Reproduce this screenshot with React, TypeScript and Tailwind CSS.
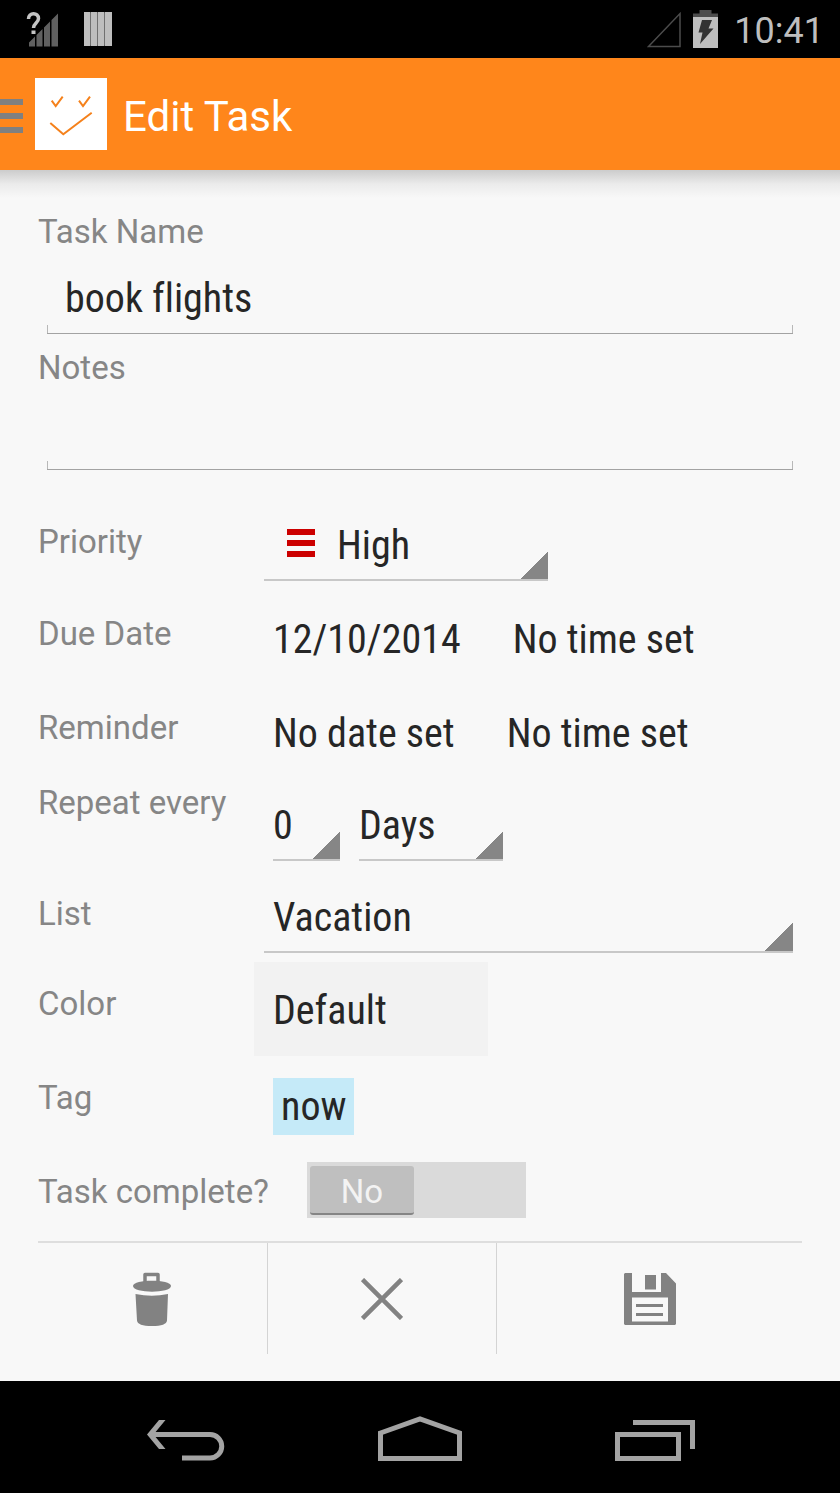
import { useState } from 'react';
import type { ReactNode } from 'react';

interface FieldRowProps {
  label: string;
  htmlFor?: string;
  className?: string;
  labelClassName?: string;
  children: ReactNode;
}

function FieldRow({
  label,
  htmlFor,
  className = 'min-h-[94px]',
  labelClassName = 'w-[216px] pt-[22px]',
  children,
}: FieldRowProps) {
  return (
    <div className={`flex items-start ${className}`}>
      <label
        htmlFor={htmlFor}
        className={`shrink-0 whitespace-nowrap text-[33px] leading-[40px] text-[#868686] ${labelClassName}`}
      >
        {label}
      </label>
      {children}
    </div>
  );
}

interface SpinnerProps {
  id: string;
  value: string;
  options: string[];
  onChange: (value: string) => void;
  icon?: ReactNode;
  ariaLabel?: string;
  className?: string;
}

function Spinner({ id, value, options, onChange, icon, ariaLabel, className = '' }: SpinnerProps) {
  return (
    <div
      className={`flex h-[69px] items-center border-b-2 border-[#c8c8c8] bg-[linear-gradient(135deg,transparent_50%,#868686_50%)] bg-[length:28px_28px] bg-[position:right_bottom] bg-no-repeat ${className}`}
    >
      {icon}
      <select
        id={id}
        aria-label={ariaLabel}
        value={value}
        onChange={(e) => onChange(e.target.value)}
        className="h-full w-full min-w-0 cursor-pointer appearance-none bg-transparent outline-none"
      >
        {options.map((option) => (
          <option key={option}>{option}</option>
        ))}
      </select>
    </div>
  );
}

const inputClass =
  'block h-[70px] w-full resize-none border-b border-[#a3a3a3] bg-[linear-gradient(#b8b8b8,#b8b8b8),linear-gradient(#b8b8b8,#b8b8b8)] bg-[length:1px_8px] bg-[position:left_bottom,right_bottom] bg-no-repeat px-[18px] outline-none [font-variant-ligatures:none]';

const valueClass =
  "font-['Roboto_Condensed','Liberation_Sans_Narrow',Roboto,sans-serif] text-[40px] leading-[50px] text-[#262626]";

function StatusBar() {
  return (
    <div className="flex h-[58px] items-center bg-black pl-[26px] pr-4">
      <svg width="34" height="36" viewBox="0 0 34 36" fill="none">
        <path d="M3 31.5 9 25.5V35.5H3ZM10.5 24 16.5 18V35.5H10.5ZM18 16.5 24 10.5V35.5H18ZM25.5 9 32 2.5V35.5H25.5Z" fill="#606060" />
        <path d="M2.500 8C2.500 1 12.500 1 12.500 7.500C12.500 12 7.500 12 7.500 18" stroke="#000" strokeWidth="7" />
        <path d="M2.500 8C2.500 1 12.500 1 12.500 7.500C12.500 12 7.500 12 7.500 17" stroke="#c4c4c4" strokeWidth="3.500" />
        <path d="M5.500 19.500h4v3.500h-4z" fill="#c4c4c4" />
      </svg>
      <svg className="ml-6" width="28" height="36" viewBox="0 0 28 36">
        <path d="M0 1h6.500v34H0ZM7 1h6.500v34H7ZM14 1h6.500v34H14ZM21 1h7v34h-7z" fill="#bebebe" />
        <path d="M6.500 2v32M13.500 2v32M20.500 2v32" stroke="#707070" />
      </svg>
      <svg className="ml-auto" width="34" height="37" viewBox="0 0 34 37" fill="none">
        <path d="M1.500 35.500 33 2.500V35.500Z" stroke="#4c4c4c" strokeWidth="1.5" />
      </svg>
      <svg className="ml-3" width="25" height="38" viewBox="0 0 25 38">
        <path d="M6.500 0h12v3.500H25V7H0V3.500h6.500z" fill="#4c4c4c" />
        <path d="M0 7h25v31H0z" fill="#bebebe" />
        <path d="M9 10h10l-3.500 8.500H20.500L7 34l2.500-11.500H5.500z" fill="#333" />
      </svg>
      <span className="ml-4 pt-1 text-[36px] leading-[44px] text-[#bebebe]">10:41</span>
    </div>
  );
}

function AppBar() {
  return (
    <header className="flex h-[112px] items-center bg-[#ff861b]">
      <button type="button" aria-label="Open menu" className="flex items-center gap-3">
        <svg width="23" height="38" viewBox="0 0 23 38" fill="#808080">
          <path d="M0 4h23v6H0zM0 18h23v6H0zM0 32h23v6H0z" />
        </svg>
        <svg width="72" height="72" viewBox="0 0 72 72" fill="none" stroke="#f5811b" strokeWidth="2">
          <path d="M0 0h72v72H0z" fill="#fff" stroke="none" />
          <path d="M16.700 22.700 20.700 28 27.700 18.700M44 22.700 48 28 55 18.700M15.300 45 28.300 56.300 56.700 34.700" />
        </svg>
      </button>
      <h1 className="ml-4 pt-1.5 text-[42px] leading-[50px] text-white">Edit Task</h1>
    </header>
  );
}

function NavBar() {
  return (
    <nav className="flex h-[112px] items-center px-[68px] pt-[3px]">
      <button type="button" aria-label="Back" className="flex flex-1 justify-center">
        <svg width="84" height="46" viewBox="0 0 84 46" fill="none">
          <path d="M4 18.500 16 4h6.500L10.500 18.500 22.500 33H16z" fill="#a3a3a3" />
          <path d="M9 18.500H67a11.700 11.700 0 0 1 0 23.500H39" stroke="#a3a3a3" strokeWidth="5" />
        </svg>
      </button>
      <button type="button" aria-label="Home" className="flex flex-1 justify-center">
        <svg width="84" height="46" viewBox="0 0 84 46" fill="none" stroke="#a3a3a3" strokeWidth="5">
          <path d="M2.500 17 42 3 81.500 17V42.500H2.500Z" />
        </svg>
      </button>
      <button type="button" aria-label="Recent apps" className="flex flex-1 justify-center">
        <svg width="84" height="46" viewBox="0 0 84 46" fill="none" stroke="#a3a3a3" strokeWidth="5">
          <path d="M4.500 18.500h61v24h-61zM20 6.500H79.500V33" />
        </svg>
      </button>
    </nav>
  );
}

export default function App() {
  const [name, setName] = useState('book flights');
  const [notes, setNotes] = useState('');
  const [priority, setPriority] = useState('High');
  const [repeatCount, setRepeatCount] = useState('0');
  const [repeatUnit, setRepeatUnit] = useState('Days');
  const [list, setList] = useState('Vacation');
  const [complete, setComplete] = useState(false);

  return (
    <div className="flex min-h-screen flex-col bg-black font-[Roboto,sans-serif]">
      <StatusBar />
      <AppBar />

      <main className="flex-1 bg-[#f8f8f8] pb-[27px]">
        <div className="h-7 bg-linear-to-b from-[#cccccc] via-[#ebebeb] to-[#f8f8f8]" />
        <form className="px-[38px] pt-[14px]" onSubmit={(e) => e.preventDefault()}>
          <label htmlFor="task-name" className="block text-[33px] leading-[40px] text-[#868686]">
            Task Name
          </label>
          <div className={`mx-[9px] mt-3 mb-[14px] ${valueClass}`}>
            <input id="task-name" type="text" value={name} onChange={(e) => setName(e.target.value)} className={inputClass} />
          </div>
          <label htmlFor="notes" className="block text-[33px] leading-[40px] text-[#868686]">
            Notes
          </label>
          <div className={`mx-[9px] mt-3 mb-[30px] ${valueClass}`}>
            <textarea id="notes" rows={1} value={notes} onChange={(e) => setNotes(e.target.value)} className={inputClass} />
          </div>

          <FieldRow label="Priority" htmlFor="priority" className="min-h-[92px]">
            <div className={`pt-3 pl-[10px] ${valueClass}`}>
              <Spinner
                id="priority"
                value={priority}
                options={['High', 'Medium', 'Low']}
                onChange={setPriority}
                className="w-[284px] gap-[22px] pl-[23px]"
                icon={
                  <svg className="mb-1.5 shrink-0" width="28" height="28" viewBox="0 0 28 28" fill="#c00">
                    <path d="M0 0h28v6H0zM0 11h28v6H0zM0 22h28v6H0z" />
                  </svg>
                }
              />
            </div>
          </FieldRow>

          <FieldRow label="Due Date" htmlFor="due-date">
            <div className={`flex gap-[52px] pt-[23px] pl-[19px] ${valueClass}`}>
              <button id="due-date" type="button">12/10/2014</button>
              <button type="button">No time set</button>
            </div>
          </FieldRow>

          <FieldRow label="Reminder" htmlFor="reminder-date">
            <div className={`flex gap-[52px] pt-[23px] pl-[19px] ${valueClass}`}>
              <button id="reminder-date" type="button">No date set</button>
              <button type="button">No time set</button>
            </div>
          </FieldRow>

          <FieldRow label="Repeat every" htmlFor="repeat-count" className="min-h-[92px]" labelClassName="w-[216px] pt-[3px]">
            <div className={`flex gap-[19px] pt-3 pl-[19px] ${valueClass}`}>
              <Spinner
                id="repeat-count"
                value={repeatCount}
                options={['0', '1', '2', '3', '4', '5']}
                onChange={setRepeatCount}
                className="w-[67px]"
              />
              <Spinner
                id="repeat-unit"
                ariaLabel="Repeat unit"
                value={repeatUnit}
                options={['Days', 'Weeks', 'Months', 'Years']}
                onChange={setRepeatUnit}
                className="w-[144px]"
              />
            </div>
          </FieldRow>

          <FieldRow label="List" htmlFor="list" className="min-h-[90px]">
            <div className={`flex-1 pt-3 pr-[9px] pl-[10px] ${valueClass}`}>
              <Spinner
                id="list"
                value={list}
                options={['Vacation', 'Home', 'Work']}
                onChange={setList}
                className="pl-[9px]"
              />
            </div>
          </FieldRow>

          <FieldRow label="Color" htmlFor="color">
            <button id="color" type="button" className={`h-[94px] w-[234px] bg-[#f2f2f2] px-[19px] pt-1 text-left ${valueClass}`}>
              Default
            </button>
          </FieldRow>

          <FieldRow label="Tag" htmlFor="tag">
            <div className="pt-[22px] pl-[19px]">
              <button id="tag" type="button" className={`h-[57px] bg-[#c5eaf8] px-2 ${valueClass}`}>
                now
              </button>
            </div>
          </FieldRow>

          <FieldRow
            label="Task complete?"
            htmlFor="complete"
            className="min-h-[91px]"
            labelClassName="w-[269px] pt-[22px]"
          >
            <label className="mt-3 flex h-14 w-[219px] cursor-pointer items-center bg-[#dadada] px-[3px]">
              <input
                id="complete"
                type="checkbox"
                role="switch"
                aria-label="Task complete?"
                checked={complete}
                onChange={(e) => setComplete(e.target.checked)}
                className="peer sr-only"
              />
              <span className="flex h-[49px] w-[104px] items-center justify-center rounded-[3px] border-b-2 border-[#858585] bg-[#bfbfbf] pt-1.5 text-[33px] leading-[40px] text-[#f3f3f3] peer-checked:ml-auto">
                {complete ? 'Yes' : 'No'}
              </span>
            </label>
          </FieldRow>

          <div className="flex h-[113px] border-t-2 border-[#dedede]">
            <button type="button" aria-label="Delete" className="flex flex-3 items-center justify-center">
              <svg width="38" height="54" viewBox="0 0 38 54" fill="#828282">
                <path d="M12 10V2.500h13V10" fill="none" stroke="#828282" strokeWidth="3.500" strokeLinejoin="round" />
                <path d="M0 14C0 7 38 7 38 14C38 21.500 0 21.500 0 14Z" />
                <path d="M2.500 22Q19 25.500 35 22L34 48.500Q33.500 54 19 54T4 48.500Z" />
              </svg>
            </button>
            <button type="button" aria-label="Cancel" className="flex flex-3 items-center justify-center border-x border-[#d4d4d4]">
              <svg width="42" height="42" viewBox="0 0 42 42" fill="none" stroke="#828282" strokeWidth="4.500">
                <path d="M1.500 1.500 40.500 40.500M40.500 1.500 1.500 40.500" />
              </svg>
            </button>
            <button type="submit" aria-label="Save" className="flex flex-4 items-center justify-center">
              <svg width="52" height="52" viewBox="0 0 52 52" fill="#828282">
                <path
                  fillRule="evenodd"
                  d="M1 0H8V19H37V0H42L52 10.500V51L51 52H1L0 51V1ZM8 24.500V48.500H44V24.500Z"
                />
                <path d="M21 2h11v14.500H21zM12 31h27v3H12zM12 40h27v3H12z" />
              </svg>
            </button>
          </div>
        </form>
      </main>

      <NavBar />
    </div>
  );
}
